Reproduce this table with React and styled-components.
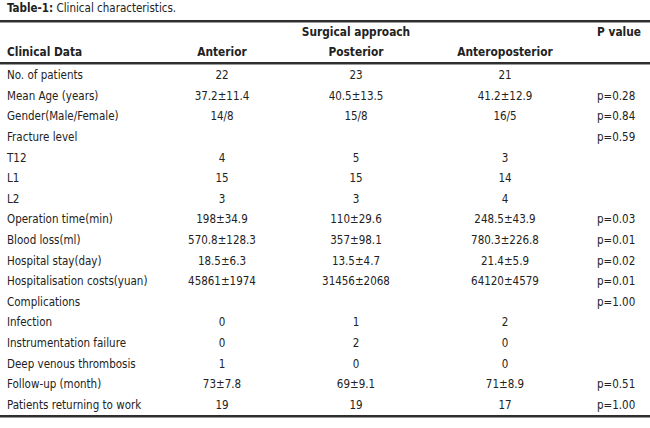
import React from "react";
import styled, { createGlobalStyle } from "styled-components";

const GlobalStyle = createGlobalStyle`
  html, body {
    margin: 0;
    padding: 0;
    background: #ffffff;
  }
  body {
    font-family: "Liberation Sans Narrow", "DejaVu Sans Condensed", "Arial Narrow", sans-serif;
    color: #222;
  }
`;

const rows = [
  ["No. of patients", "22", "23", "21", ""],
  ["Mean Age (years)", "37.2±11.4", "40.5±13.5", "41.2±12.9", "p=0.28"],
  ["Gender(Male/Female)", "14/8", "15/8", "16/5", "p=0.84"],
  ["Fracture level", "", "", "", "p=0.59"],
  ["T12", "4", "5", "3", ""],
  ["L1", "15", "15", "14", ""],
  ["L2", "3", "3", "4", ""],
  ["Operation time(min)", "198±34.9", "110±29.6", "248.5±43.9", "p=0.03"],
  ["Blood loss(ml)", "570.8±128.3", "357±98.1", "780.3±226.8", "p=0.01"],
  ["Hospital stay(day)", "18.5±6.3", "13.5±4.7", "21.4±5.9", "p=0.02"],
  ["Hospitalisation costs(yuan)", "45861±1974", "31456±2068", "64120±4579", "p=0.01"],
  ["Complications", "", "", "", "p=1.00"],
  ["Infection", "0", "1", "2", ""],
  ["Instrumentation failure", "0", "2", "0", ""],
  ["Deep venous thrombosis", "1", "0", "0", ""],
  ["Follow-up (month)", "73±7.8", "69±9.1", "71±8.9", "p=0.51"],
  ["Patients returning to work", "19", "19", "17", "p=1.00"],
];

const Page = styled.div`
  width: 650px;
  height: 428px;
  overflow: hidden;
`;

const Caption = styled.div`
  height: 20px;
  padding-left: 7px;
  font-size: 11.5px;
  line-height: 16px;
  b {
    font-weight: 700;
  }
`;

const Rule = styled.div`
  height: 2px;
  background: #2e2e2e;
  box-shadow: 0 1px 0 #9a9a9a;
`;

const Row = styled.div`
  display: grid;
  grid-template-columns: 160px 124px 144px 154px 1fr;
  align-items: center;
  height: ${(p) => p.$h || 20.6}px;
`;

const Cell = styled.div`
  font-size: ${(p) => (p.$head ? 11.8 : 11.5)}px;
  font-weight: ${(p) => (p.$head ? 700 : 400)};
  text-align: ${(p) => p.$align || "center"};
  padding-left: ${(p) => p.$pad || 0}px;
  white-space: nowrap;
`;

const Body = styled.div`
  padding-top: 1px;
`;

export default function App() {
  return (
    <Page>
      <GlobalStyle />
      <Caption>
        <b>Table-1:</b> Clinical characteristics.
      </Caption>
      <Rule />
      <Row $h={20}>
        <Cell $head />
        <Cell $head />
        <Cell $head>Surgical approach</Cell>
        <Cell $head />
        <Cell $head $align="left" $pad={15}>P value</Cell>
      </Row>
      <Row $h={20}>
        <Cell $head $align="left" $pad={7}>Clinical Data</Cell>
        <Cell $head>Anterior</Cell>
        <Cell $head>Posterior</Cell>
        <Cell $head>Anteroposterior</Cell>
        <Cell $head />
      </Row>
      <Rule />
      <Body>
        {rows.map((r) => (
          <Row key={r[0]}>
            <Cell $align="left" $pad={7}>{r[0]}</Cell>
            <Cell>{r[1]}</Cell>
            <Cell>{r[2]}</Cell>
            <Cell>{r[3]}</Cell>
            <Cell $align="left" $pad={15}>{r[4]}</Cell>
          </Row>
        ))}
      </Body>
      <Rule />
    </Page>
  );
}
